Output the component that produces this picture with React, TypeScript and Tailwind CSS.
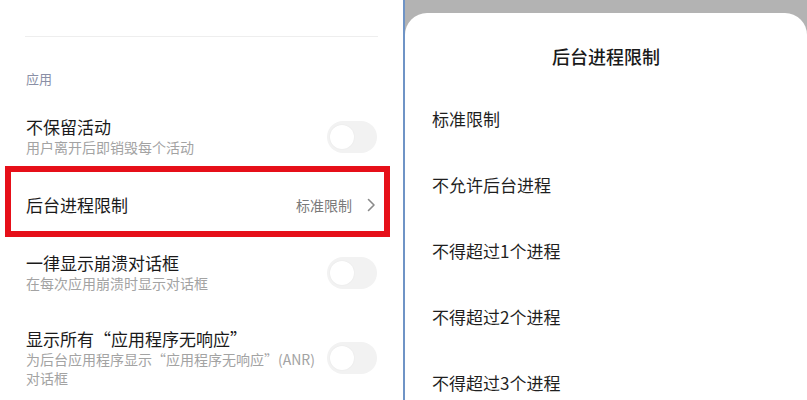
import React from "react";

const FONT = "font-['Noto_Sans_CJK_SC','Noto_Sans',sans-serif]";

const SHEET_OPTIONS = [
  "标准限制",
  "不允许后台进程",
  "不得超过1个进程",
  "不得超过2个进程",
  "不得超过3个进程",
];

function Toggle() {
  return (
    <div className="flex h-[32px] w-[50px] shrink-0 items-center rounded-full bg-[#f2f2f2] px-[3px]">
      <div className="h-[24px] w-[24px] rounded-full bg-white shadow-[0_0_2px_rgba(0,0,0,0.06)]" />
    </div>
  );
}

function SwitchRow({
  title,
  subtitle,
  className = "",
}: {
  title: string;
  subtitle: React.ReactNode;
  className?: string;
}) {
  return (
    <div className={`flex items-center justify-between pl-[26px] pr-[26px] ${className}`}>
      <div className="flex flex-col">
        <div className="text-[17px] leading-[22px] text-[#1a1a1a]">{title}</div>
        <div className="text-[14px] leading-[19px] text-[#a3a3a3]">{subtitle}</div>
      </div>
      <Toggle />
    </div>
  );
}

export default function App() {
  return (
    <div className={`flex h-[400px] w-[807px] overflow-hidden bg-white ${FONT}`}>
      {/* left: developer options list */}
      <div className="flex w-[403px] shrink-0 flex-col bg-white">
        <div className="h-[36px]" />
        <div className="mx-[25px] h-px bg-[#eeeeee]" />

        <div className="mt-[33px] pl-[26px] text-[13px] leading-[18px] text-[#8a8fa6]">应用</div>

        <SwitchRow className="mt-[28px]" title="不保留活动" subtitle="用户离开后即销毁每个活动" />

        <div className="ml-[5px] mr-[13px] mt-[9px] flex h-[71px] items-center justify-between border-[6px] border-[#e60f19] pl-[15px] pr-[8px] pt-[7px]">
          <span className="text-[17px] leading-[22px] text-[#1a1a1a]">后台进程限制</span>
          <div className="flex items-center gap-[15px]">
            <span className="text-[14px] leading-[20px] text-[#7a7a7a]">标准限制</span>
            <svg width="9" height="14" viewBox="0 0 9 14" fill="none">
              <polyline points="1.5,1.5 7,7 1.5,12.5" stroke="#8a8a8a" strokeWidth="1.6" strokeLinecap="round" strokeLinejoin="round" />
            </svg>
          </div>
        </div>

        <SwitchRow className="mt-[15px]" title="一律显示崩溃对话框" subtitle="在每次应用崩溃时显示对话框" />

        <SwitchRow
          className="mt-[35px]"
          title="显示所有“应用程序无响应”"
          subtitle={
            <>
              为后台应用程序显示“应用程序无响应”(ANR)
              <br />
              对话框
            </>
          }
        />
      </div>

      {/* divider between the two screenshots */}
      <div className="w-[2px] shrink-0 bg-[#6f94c6]" />

      {/* right: bottom sheet */}
      <div className="flex flex-1 flex-col bg-[#b3b3b3] pt-[13px]">
        <div className="flex flex-1 flex-col rounded-t-[22px] bg-white pt-[31px]">
          <div className="text-center text-[18px] font-medium leading-[24px] text-[#1a1a1a]">后台进程限制</div>
          <div className="mt-[18px] flex flex-col">
            {SHEET_OPTIONS.map((opt) => (
              <div key={opt} className="flex h-[66px] shrink-0 items-center pl-[27px] text-[17px] leading-[24px] text-[#1f1f1f]">
                {opt}
              </div>
            ))}
          </div>
        </div>
      </div>
    </div>
  );
}
